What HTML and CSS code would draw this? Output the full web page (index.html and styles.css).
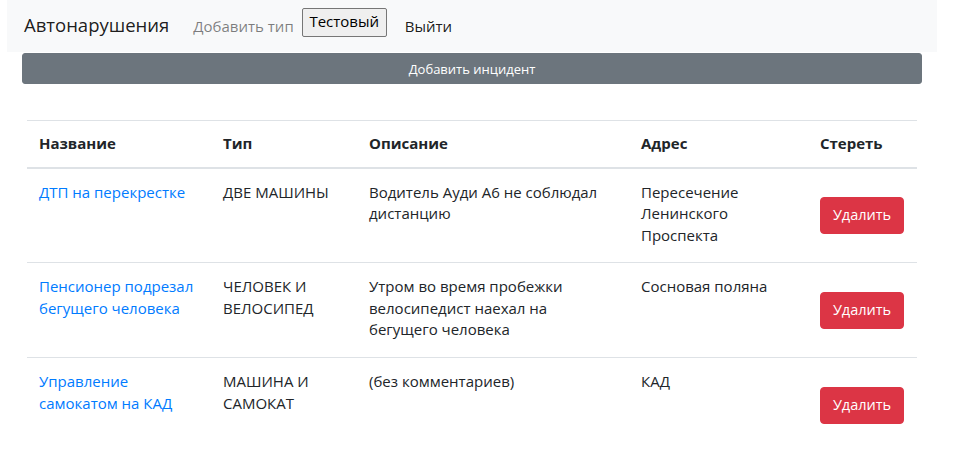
FILE: index.html
```html
<!DOCTYPE html>
<html lang="ru">
<head>
<meta charset="utf-8">
<title>Автонарушения</title>
<link rel="stylesheet" href="styles.css">
</head>
<body>
<nav class="navbar">
  <span class="brand">Автонарушения</span>
  <a class="nav-link muted" href="#">Добавить тип</a>
  <button class="user-btn" type="button">Тестовый</button>
  <a class="nav-link" href="#">Выйти</a>
</nav>
<main class="content">
  <button class="add-btn" type="button">Добавить инцидент</button>
  <table class="table">
    <colgroup>
      <col class="c1"><col class="c2"><col class="c3"><col class="c4"><col class="c5">
    </colgroup>
    <thead>
      <tr><th>Название</th><th>Тип</th><th>Описание</th><th>Адрес</th><th>Стереть</th></tr>
    </thead>
    <tbody>
      <tr>
        <td><a href="#">ДТП на перекрестке</a></td>
        <td>ДВЕ МАШИНЫ</td>
        <td>Водитель Ауди А6 не соблюдал дистанцию</td>
        <td>Пересечение Ленинского Проспекта</td>
        <td class="act"><button class="del-btn" type="button">Удалить</button></td>
      </tr>
      <tr>
        <td><a href="#">Пенсионер подрезал бегущего человека</a></td>
        <td>ЧЕЛОВЕК И ВЕЛОСИПЕД</td>
        <td>Утром во время пробежки велосипедист наехал на бегущего человека</td>
        <td>Сосновая поляна</td>
        <td class="act"><button class="del-btn" type="button">Удалить</button></td>
      </tr>
      <tr>
        <td><a href="#">Управление самокатом на КАД</a></td>
        <td>МАШИНА И САМОКАТ</td>
        <td>(без комментариев)</td>
        <td>КАД</td>
        <td class="act"><button class="del-btn" type="button">Удалить</button></td>
      </tr>
    </tbody>
  </table>
</main>
</body>
</html>
```
FILE: styles.css
```css
* { box-sizing: border-box; }
html, body { margin: 0; background: #fff; }
body {
  font-family: "Open Sans", "Noto Sans", "Liberation Sans", sans-serif;
  font-size: 15px;
  color: #212529;
}
a { color: #007bff; text-decoration: none; }

.navbar {
  margin-left: 7px;
  width: 930px;
  height: 52px;
  background: #f8f9fa;
  display: flex;
  align-items: center;
  padding-left: 17px;
}
.brand {
  font-size: 18.5px;
  color: rgba(0,0,0,.9);
  margin-right: 24px;
  line-height: 1;
  padding-bottom: 1px;
}
.nav-link { color: rgba(0,0,0,.9); font-size: 15px; }
.nav-link.muted { color: rgba(0,0,0,.5); margin-right: 8px; }
.user-btn {
  font-family: inherit;
  font-size: 15px;
  color: #000;
  background: #efefef;
  border: 1px solid #767676;
  border-radius: 2px;
  height: 29px;
  width: 85px;
  padding: 0 0 3px;
  margin-right: 18px;
  margin-top: -7px;
}

.content { padding: 1px 38px 0 22px; }
.add-btn {
  display: block;
  width: 900px;
  height: 31px;
  margin-top: 0;
  background: #6c757d;
  border: 1px solid #6c757d;
  border-radius: 3px;
  color: #fff;
  font-family: inherit;
  font-size: 13px;
  padding: 0;
}

.table {
  margin: 36px 0 0 5px;
  width: 890px;
  border-collapse: collapse;
  table-layout: fixed;
}
.c1 { width: 184px; }
.c2 { width: 146px; }
.c3 { width: 272px; }
.c4 { width: 179px; }
.c5 { width: 109px; }
.table th, .table td {
  padding: 12px;
  line-height: 21.5px;
  text-align: left;
  vertical-align: top;
  border-top: 1px solid #dee2e6;
}
.table th {
  font-weight: 700;
  padding: 12px 12px 12px;
  border-bottom: 2px solid #dee2e6;
}
.table td { height: 95px; padding-top: 13px; }
.table td.act { vertical-align: middle; padding-top: 13px; }
.del-btn {
  width: 84px;
  height: 37px;
  background: #dc3545;
  border: 1px solid #dc3545;
  border-radius: 4px;
  color: #fff;
  font-family: inherit;
  font-size: 14.5px;
  padding: 0 0 2px;
}
```
